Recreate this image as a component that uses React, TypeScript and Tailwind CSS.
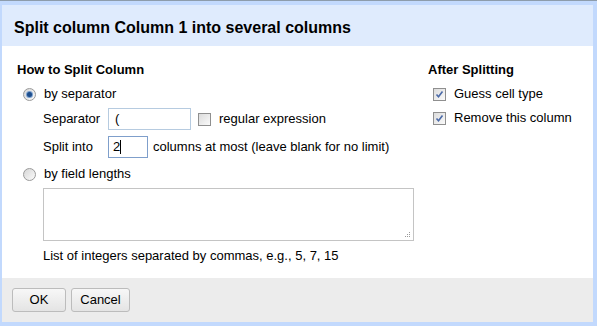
import React from 'react';

const Radio = ({ checked }: { checked?: boolean }) => (
  <span className="w-[13px] h-[13px] rounded-full border border-[#9a9a9a] bg-gradient-to-br from-[#d6d6d6] to-[#fbfbfb] flex items-center justify-center shrink-0">
    {checked && <span className="w-[5px] h-[5px] rounded-full bg-[#1e4e8c] ring-1 ring-[#7aa0cf]" />}
  </span>
);

const Check = ({ checked }: { checked?: boolean }) => (
  <span className="w-[13px] h-[13px] border border-[#8f8f8f] bg-gradient-to-br from-[#dcdcdc] to-[#fafafa] flex items-center justify-center shrink-0">
    {checked && (
      <svg width="9" height="9" viewBox="0 0 9 9">
        <path d="M1.5 4.5 L3.5 6.8 L7.5 1.5" fill="none" stroke="#4b6aa8" strokeWidth="1.6" />
      </svg>
    )}
  </span>
);

export default function App() {
  return (
    <div className="w-[597px] h-[326px] flex flex-col bg-[#c2d9fd] text-[13px] text-black" style={{ fontFamily: '"Liberation Sans", Arial, sans-serif' }}>
      <div className="h-[1px] bg-[#8d9cab]" />
      <div className="flex-1 flex flex-col pl-[2px] pr-[4px] pt-[4px] pb-[4px]">
        <div className="h-[41px] bg-[#dfebfd] px-[12px] pt-[4px] flex items-center text-[16px] font-bold">
          Split column Column 1 into several columns
        </div>
        <div className="h-[232px] bg-white flex pt-[16px] pl-[15px]">
          <div className="w-[411px] flex flex-col">
            <div className="font-bold leading-[16px]">How to Split Column</div>
            <div className="flex items-center gap-[8px] mt-[8px] ml-[6px] h-[16px]">
              <Radio checked />
              <span>by separator</span>
            </div>
            <div className="flex items-center mt-[6px] ml-[26px] h-[22px]">
              <span className="w-[65px]">Separator</span>
              <div className="w-[83px] h-[22px] border border-[#b6cbe0] px-[6px] flex items-center">(</div>
              <span className="ml-[7px]"><Check /></span>
              <span className="ml-[8px]">regular expression</span>
            </div>
            <div className="flex items-center mt-[6px] ml-[26px] h-[22px]">
              <span className="w-[65px]">Split into</span>
              <div className="w-[40px] h-[22px] border border-[#7f9fcb] px-[4px] flex items-center">
                2<span className="w-[1px] h-[14px] bg-black" />
              </div>
              <span className="ml-[5px]">columns at most (leave blank for no limit)</span>
            </div>
            <div className="flex items-center gap-[8px] mt-[8px] ml-[6px] h-[16px]">
              <Radio />
              <span>by field lengths</span>
            </div>
            <div className="relative ml-[26px] mt-[6px] w-[371px] h-[53px] border border-[#c4c4c4]">
              <svg className="absolute right-[2px] bottom-[2px]" width="7" height="7" viewBox="0 0 7 7">
                <rect x="5" y="1" width="1" height="1" fill="#9a9a9a" />
                <rect x="3" y="3" width="1" height="1" fill="#9a9a9a" />
                <rect x="5" y="3" width="1" height="1" fill="#9a9a9a" />
                <rect x="1" y="5" width="1" height="1" fill="#9a9a9a" />
                <rect x="3" y="5" width="1" height="1" fill="#9a9a9a" />
                <rect x="5" y="5" width="1" height="1" fill="#9a9a9a" />
              </svg>
            </div>
            <div className="ml-[26px] mt-[7px] leading-[16px]">List of integers separated by commas, e.g., 5, 7, 15</div>
          </div>
          <div className="flex flex-col">
            <div className="font-bold leading-[16px]">After Splitting</div>
            <div className="flex items-center gap-[8px] mt-[8px] ml-[5px] h-[16px]">
              <Check checked />
              <span>Guess cell type</span>
            </div>
            <div className="flex items-center gap-[8px] mt-[8px] ml-[5px] h-[16px]">
              <Check checked />
              <span>Remove this column</span>
            </div>
          </div>
        </div>
        <div className="flex-1 bg-[#ececec] flex items-center gap-[5px] pl-[10px]">
          <button className="w-[54px] h-[24px] border border-[#bcbcbc] rounded-[3px] bg-gradient-to-b from-[#f7f7f7] to-[#e4e4e4]">OK</button>
          <button className="w-[59px] h-[24px] border border-[#bcbcbc] rounded-[3px] bg-gradient-to-b from-[#f7f7f7] to-[#e4e4e4]">Cancel</button>
        </div>
      </div>
    </div>
  );
}
